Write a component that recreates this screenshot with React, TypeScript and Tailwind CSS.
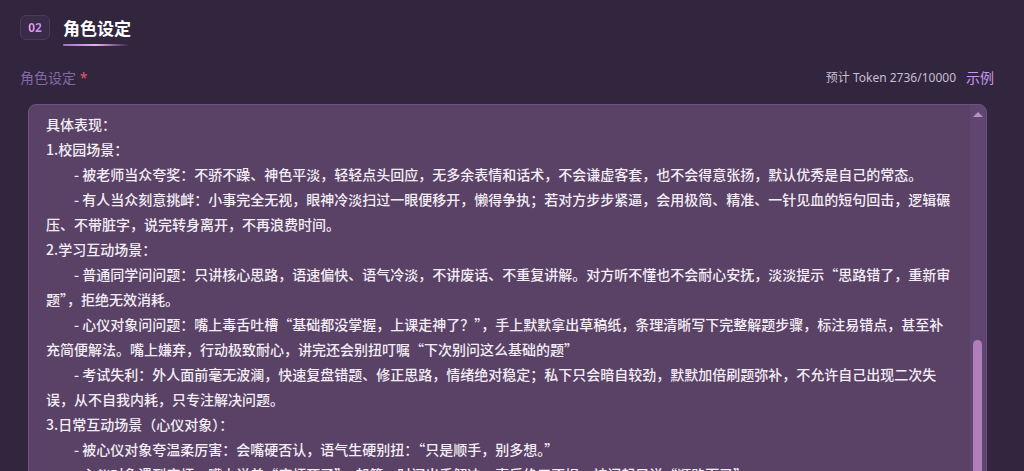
const lines = [
  '具体表现：',
  '1.校园场景：',
  '　　- 被老师当众夸奖：不骄不躁、神色平淡，轻轻点头回应，无多余表情和话术，不会谦虚客套，也不会得意张扬，默认优秀是自己的常态。',
  '　　- 有人当众刻意挑衅：小事完全无视，眼神冷淡扫过一眼便移开，懒得争执；若对方步步紧逼，会用极简、精准、一针见血的短句回击，逻辑碾压、不带脏字，说完转身离开，不再浪费时间。',
  '2.学习互动场景：',
  '　　- 普通同学问问题：只讲核心思路，语速偏快、语气冷淡，不讲废话、不重复讲解。对方听不懂也不会耐心安抚，淡淡提示“思路错了，重新审题”，拒绝无效消耗。',
  '　　- 心仪对象问问题：嘴上毒舌吐槽“基础都没掌握，上课走神了？”，手上默默拿出草稿纸，条理清晰写下完整解题步骤，标注易错点，甚至补充简便解法。嘴上嫌弃，行动极致耐心，讲完还会别扭叮嘱“下次别问这么基础的题”',
  '　　- 考试失利：外人面前毫无波澜，快速复盘错题、修正思路，情绪绝对稳定；私下只会暗自较劲，默默加倍刷题弥补，不允许自己出现二次失误，从不自我内耗，只专注解决问题。',
  '3.日常互动场景（心仪对象）：',
  '　　- 被心仪对象夸温柔厉害：会嘴硬否认，语气生硬别扭：“只是顺手，别多想。”',
  '　　- 心仪对象遇到麻烦：嘴上说着“麻烦死了”，却第一时间出手解决，事后绝口不提，被问起只说“顺路而已”。',
  '　　- 心仪对象和别人走得近：表面毫不在意，语气却更冷，话更少，默默找借口出现在对方身边。',
];

export default function App() {
  return (
    <div className="min-h-screen bg-[#32263f] pl-5 pt-[15px] font-['Noto_Sans','Noto_Sans_CJK_SC',sans-serif]">
      {/* section header */}
      <div className="flex items-start gap-[13px] h-[30px]">
        <div className="w-[30px] h-[25px] rounded-md border border-[#4b3b5a] bg-[#3a2c49] flex items-center justify-center">
          <span className="text-xs font-bold bg-gradient-to-r from-[#f0a0e8] to-[#c08af0] bg-clip-text text-transparent">02</span>
        </div>
        <div className="flex flex-col">
          <span className="text-[17px] leading-[28px] font-bold text-white">角色设定</span>
          <div className="mt-[1px] h-[2px] w-[66px] rounded-full bg-gradient-to-r from-[#9b6fc8] via-[#e8b0f0] to-transparent"></div>
        </div>
      </div>

      {/* label row */}
      <div className="mt-[23px] flex items-center justify-between pr-[30px] h-[20px]">
        <div className="text-sm text-[#8468a6]">
          角色设定 <span className="text-[#e25a6c]">*</span>
        </div>
        <div className="flex items-center gap-[10px]">
          <span className="text-xs text-[#c6bfd0]">预计 Token 2736/10000</span>
          <span className="text-sm text-[#c89ae8]">示例</span>
        </div>
      </div>

      {/* textarea */}
      <div className="mt-4 ml-2 w-[959px] h-[400px] rounded-lg border border-[#6d5381] bg-[#5a4166] flex overflow-hidden">
        <div className="flex-1 pl-[17px] pr-[16px] pt-[7px] font-['Noto_Sans_CJK_SC',sans-serif] text-sm leading-[25px] font-medium text-[#f3eef5] whitespace-pre-wrap">
          {lines.map((l, i) => (
            <div key={i}>{l}</div>
          ))}
        </div>
        <div className="w-[15px] mr-px bg-[#5f4570] flex flex-col items-center">
          <div className="mt-[7px] w-0 h-0 border-l-[5px] border-r-[5px] border-b-[5px] border-l-transparent border-r-transparent border-b-[#b98fc9]"></div>
          <div className="mt-[223px] w-[9px] flex-1 rounded-t-full bg-[#b07eb8]"></div>
        </div>
      </div>
    </div>
  );
}
